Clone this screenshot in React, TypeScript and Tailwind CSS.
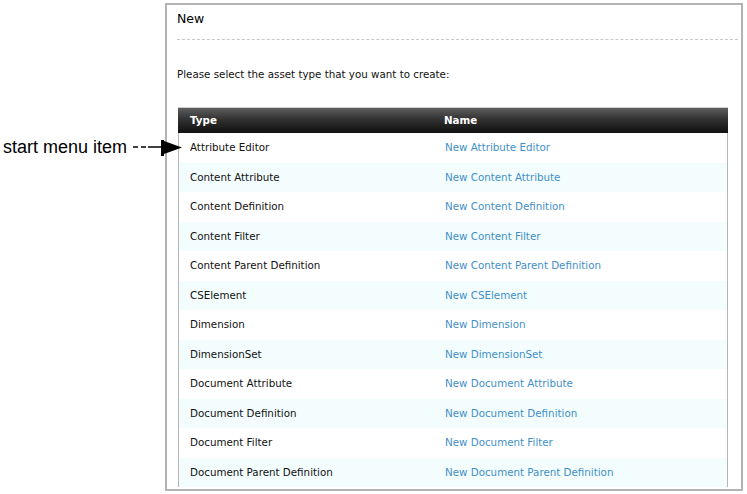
const rows = [
  'Attribute Editor',
  'Content Attribute',
  'Content Definition',
  'Content Filter',
  'Content Parent Definition',
  'CSElement',
  'Dimension',
  'DimensionSet',
  'Document Attribute',
  'Document Definition',
  'Document Filter',
  'Document Parent Definition',
];

function Pointer() {
  // callout arrow from the label into the first table row
  return (
    <svg className="absolute left-0 top-0 pointer-events-none" width="747" height="494">
      <line x1="133" y1="147" x2="138" y2="147" stroke="#000" strokeWidth="1.5" />
      <line x1="141" y1="147" x2="146" y2="147" stroke="#000" strokeWidth="1.5" />
      <line x1="148" y1="147" x2="162" y2="147" stroke="#000" strokeWidth="1.5" />
      <rect x="161" y="140" width="3" height="16" fill="#000" />
      <polygon points="164,141 164,154 182,147.5" fill="#000" />
    </svg>
  );
}

export default function App() {
  return (
    <div className="relative flex w-[747px] h-[494px] bg-white overflow-hidden">
      <div className="w-[165px] shrink-0 pl-[3px] pt-[137px]">
        <div className="text-[18px] leading-[20px] text-black font-['Liberation_Sans',Arial,sans-serif]">
          start menu item
        </div>
      </div>

      <div className="mt-[3px] w-[578px] h-[488px] shrink-0 border-2 border-[#b3b3b3] pl-[10px] pr-[3px] overflow-hidden font-['DejaVu_Sans',Tahoma,sans-serif] text-[10.3px] text-[#111]">
        <div className="pt-[6px] text-[12.5px] leading-[16px] text-black">New</div>
        <div className="mt-[12px] border-t border-dashed border-[#c8c8c8]" />
        <div className="mt-[27px] leading-[14px]">Please select the asset type that you want to create:</div>

        <div className="mt-[26px] ml-[1px] w-[550px]">
          <div className="flex h-[26px] items-center border-t border-[#cfcfcf] bg-gradient-to-b from-[#5e5e5e] via-[#2e2e2e] to-[#111] font-bold text-white">
            <div className="w-[266px] pl-[12px]">Type</div>
            <div>Name</div>
          </div>
          <div className="border-x border-[#b5b5b5]">
            {rows.map((r, i) => (
              <div
                key={r}
                className={`flex h-[29.5px] items-center ${i % 2 === 1 ? 'bg-[#f3fdfe]' : 'bg-white'}`}
              >
                <div className="w-[266px] pl-[11px]">{r}</div>
                <div className="text-[#3f8fc9]">New {r}</div>
              </div>
            ))}
          </div>
        </div>
      </div>

      <Pointer />
    </div>
  );
}
